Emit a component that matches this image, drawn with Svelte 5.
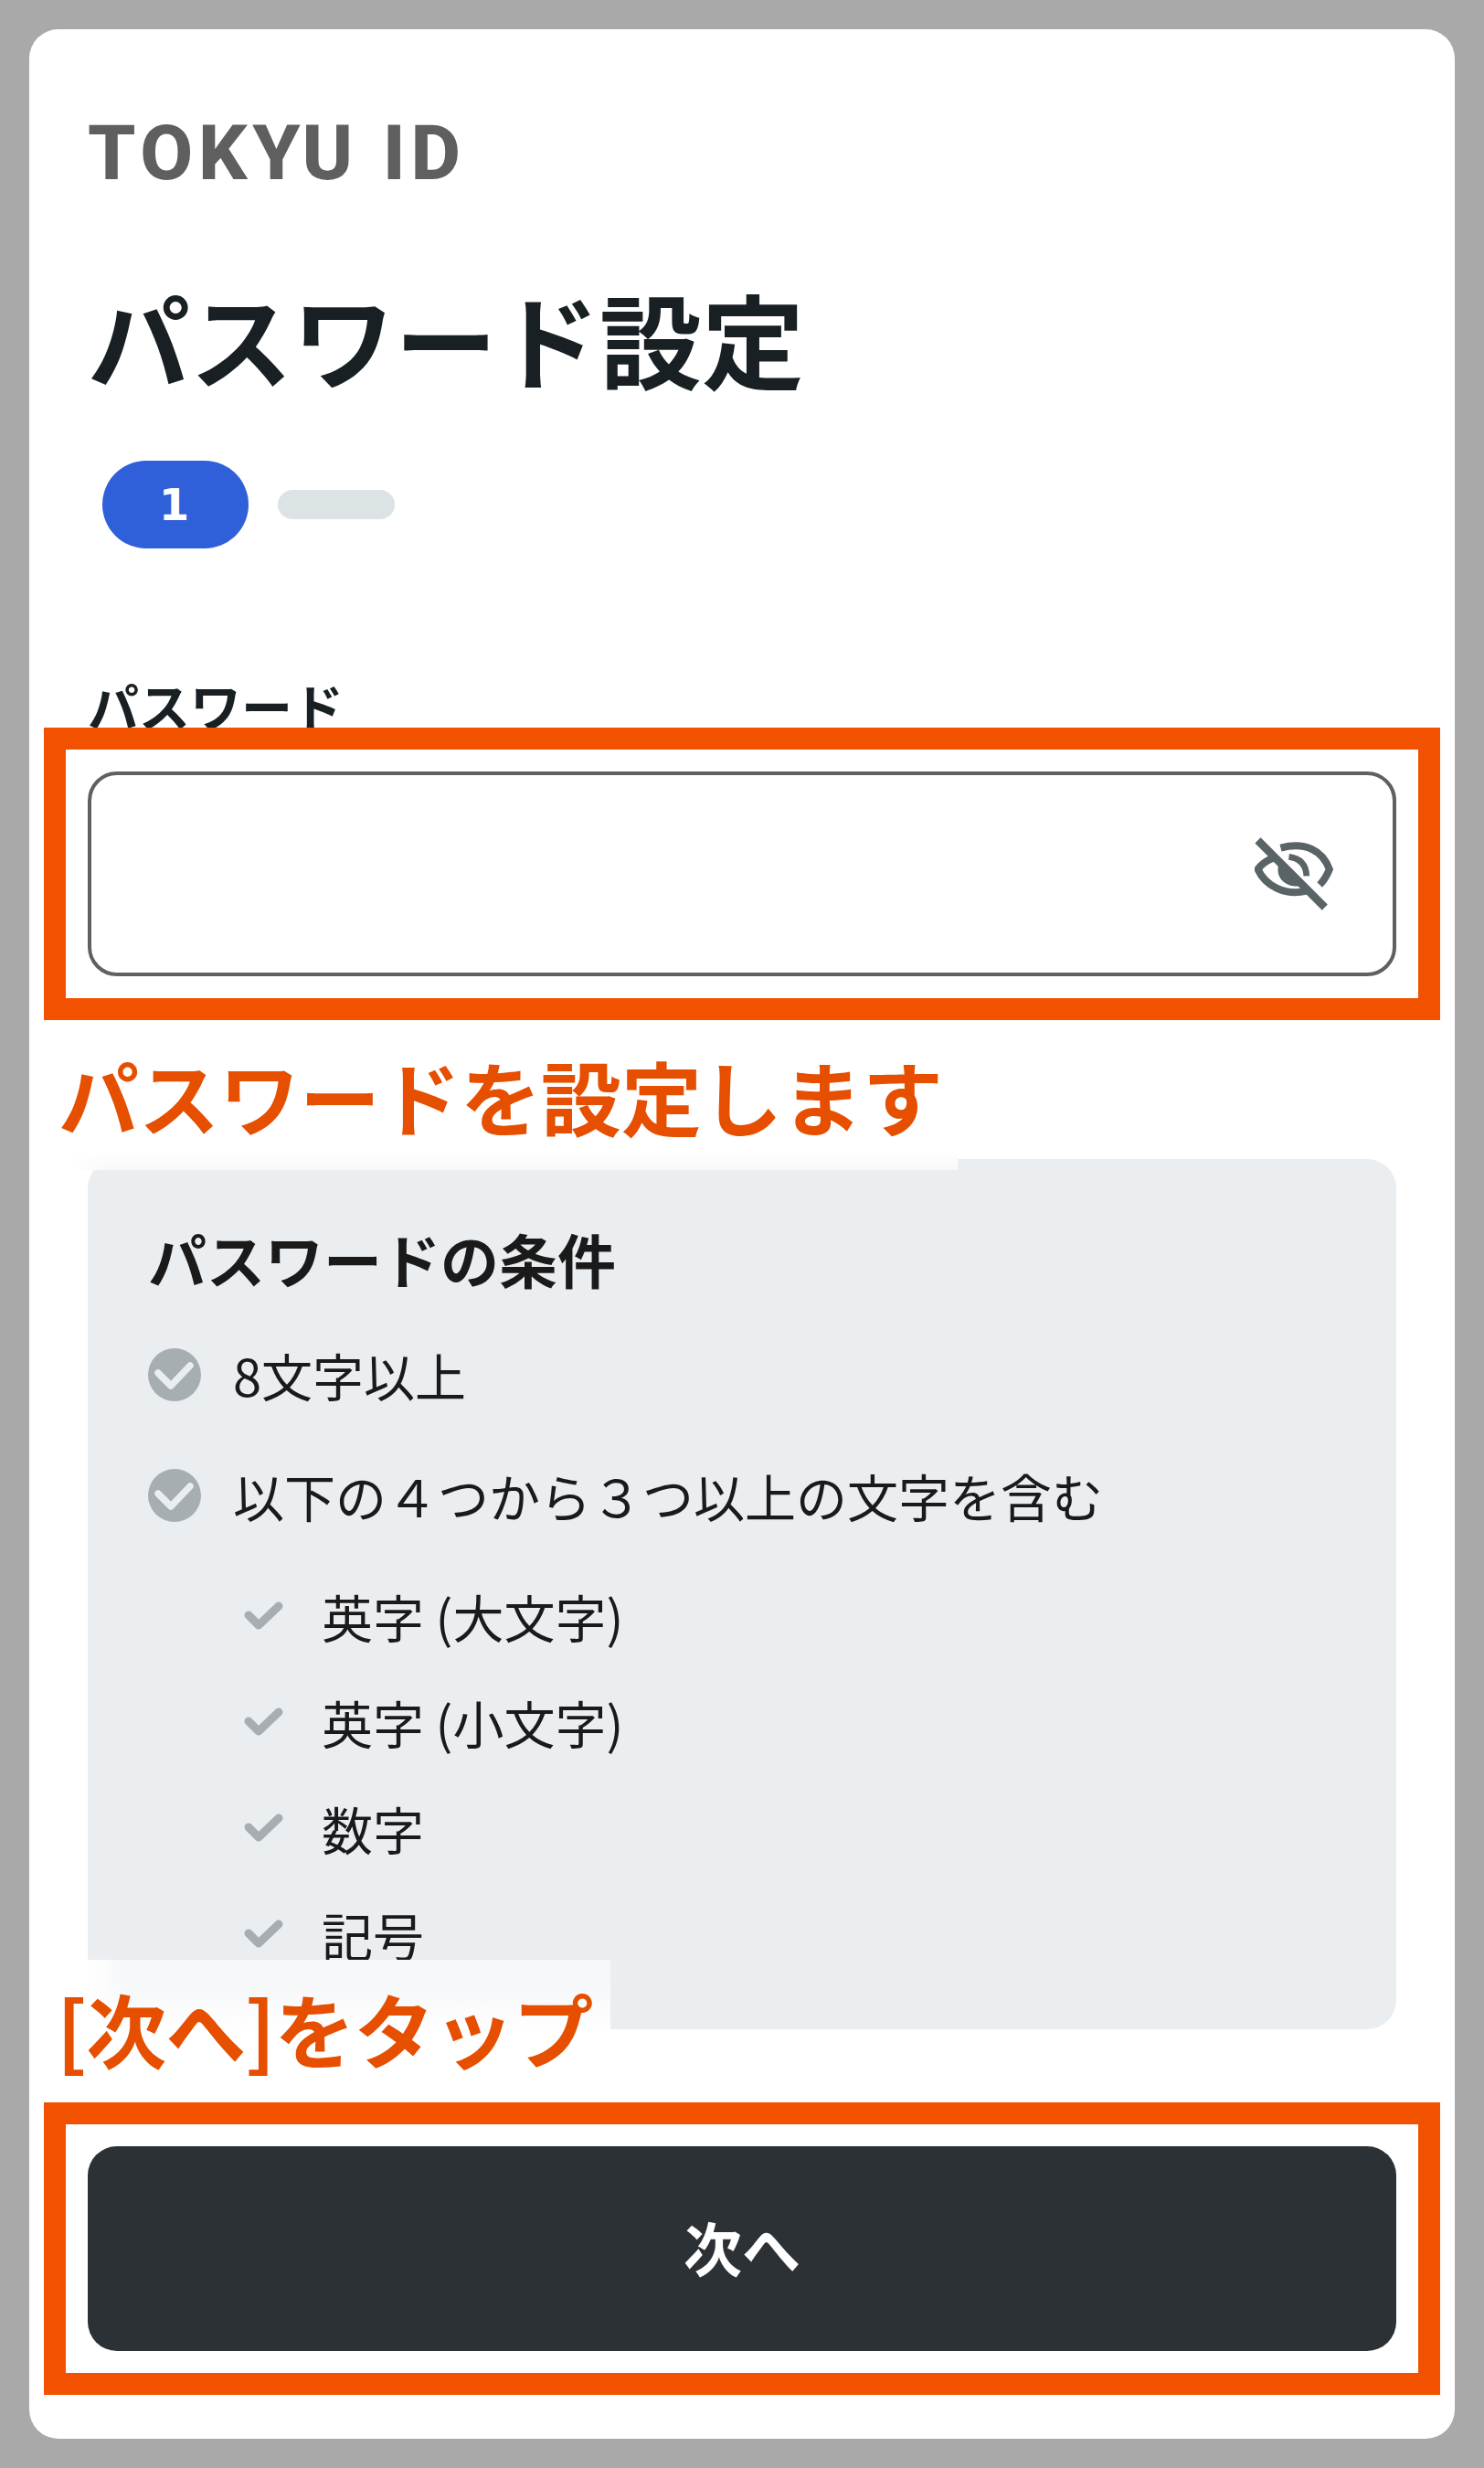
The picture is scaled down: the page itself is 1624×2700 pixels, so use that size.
<script lang="ts">
	const mainRules = ['8文字以上', '以下の４つから３つ以上の文字を含む'];
	const subRules = ['英字 (大文字)', '英字 (小文字)', '数字', '記号'];
</script>

<div class="page">
	<main class="card">
		<div class="logo">TOKYU ID</div>
		<h1>パスワード設定</h1>

		<div class="stepper">
			<span class="step current">1</span>
			<span class="step"></span>
		</div>

		<label class="label" for="password">パスワード</label>
		<div class="field">
			<input id="password" type="password" />
			<svg class="eye" viewBox="100 78 260 240" aria-hidden="true">
				<path class="eye-line" d="M185 113C265 92 322 120 345 183C337 203 327 220 313 234" />
				<path class="eye-line" d="M160 146C137 155 121 167 110 183C135 238 200 272 270 254" />
				<path class="eye-fill" d="M178 165L250 237C220 245 176 225 176 185C176 177 177 171 178 165Z" />
				<path class="eye-line thin" d="M212 142C245 146 268 165 270 205" />
				<path class="slash" d="M110 88L330 308" />
			</svg>
			<div class="highlight"></div>
		</div>

		<section class="rules">
			<h2>パスワードの条件</h2>
			<ul class="main-rules">
				{#each mainRules as rule}
					<li>
						<svg class="check-circle" viewBox="0 0 58 58" aria-hidden="true">
							<circle cx="29" cy="29" r="29" fill="#a6aeb1" />
							<path d="M11 27L25 41L46 19" fill="none" stroke="#eaeef1" stroke-width="7.5" stroke-linecap="round" stroke-linejoin="round" />
						</svg>
						<span>{rule}</span>
					</li>
				{/each}
			</ul>
			<ul class="sub-rules">
				{#each subRules as rule}
					<li>
						<svg class="check" viewBox="0 0 44 32" aria-hidden="true">
							<path d="M5 15L16 26L38 5" fill="none" stroke="#a6aeb1" stroke-width="9" stroke-linecap="round" stroke-linejoin="round" />
						</svg>
						<span>{rule}</span>
					</li>
				{/each}
			</ul>
		</section>

		<div class="field">
			<button type="button">次へ</button>
			<div class="highlight"></div>
		</div>

		<p class="note note-password">パスワードを設定します</p>
		<p class="note note-next">[次へ]をタップ</p>
	</main>
</div>

<style>
	:global(body) {
		margin: 0;
		background: #a9a9a9;
		font-family: 'Noto Sans CJK JP', 'Noto Sans', sans-serif;
	}

	.page {
		box-sizing: border-box;
		height: 2700px;
		padding: 32px;
	}

	.card {
		position: relative;
		box-sizing: border-box;
		height: 2636px;
		padding: 94px 64px 0;
		background: #fff;
		border-radius: 32px;
	}

	.logo {
		font-family: Roboto, sans-serif;
		font-size: 84px;
		font-weight: 800;
		line-height: 84px;
		letter-spacing: 5.8px;
		color: #5f5f5f;
	}

	h1 {
		margin: 91px 0 0;
		font-size: 112px;
		font-weight: 700;
		line-height: 136px;
		color: #182024;
	}

	.stepper {
		display: flex;
		align-items: center;
		gap: 32px;
		margin: 67px 0 0 16px;
	}

	.step {
		width: 128px;
		height: 32px;
		background: #dce3e5;
		border-radius: 16px;
	}

	.step.current {
		display: flex;
		align-items: center;
		justify-content: center;
		width: 160px;
		height: 96px;
		padding-right: 3px;
		box-sizing: border-box;
		font-family: 'DejaVu Sans', sans-serif;
		font-size: 48px;
		font-weight: 700;
		color: #fff;
		background: #2f60d9;
		border-radius: 48px;
	}

	.label {
		display: block;
		margin-top: 131px;
		font-size: 56px;
		font-weight: 700;
		line-height: 80px;
		height: 113px;
		color: #182024;
	}

	.field {
		position: relative;
	}

	input {
		display: block;
		box-sizing: border-box;
		width: 100%;
		height: 224px;
		background: #fff;
		border: 4px solid #5f6161;
		border-radius: 32px;
		outline: none;
	}

	.eye {
		position: absolute;
		top: 72px;
		right: 68px;
		width: 87px;
		height: 80px;
	}

	.eye-line {
		fill: none;
		stroke: #5a6366;
		stroke-width: 24;
	}

	.eye-line.thin {
		stroke-width: 20;
	}

	.eye-fill {
		fill: #5a6366;
	}

	.slash {
		fill: none;
		stroke: #5a6366;
		stroke-width: 26;
	}

	.highlight {
		position: absolute;
		inset: -48px;
		border: 24px solid #f25200;
		pointer-events: none;
	}

	.rules {
		box-sizing: border-box;
		height: 952px;
		margin: 200px 0 128px;
		padding: 60px 64px 0 66px;
		background: #eaeef1;
		border-radius: 32px;
	}

	h2 {
		margin: 0;
		font-size: 64px;
		font-weight: 700;
		line-height: 96px;
		color: #1a1a1a;
	}

	ul {
		margin: 0;
		padding: 0;
		list-style: none;
	}

	li {
		display: flex;
		align-items: center;
		font-size: 56px;
		line-height: 72px;
		color: #1a1a1a;
	}

	.main-rules {
		display: flex;
		flex-direction: column;
		gap: 60px;
		margin-top: 44px;
	}

	.main-rules li {
		gap: 35px;
	}

	.check-circle {
		flex: none;
		width: 58px;
		height: 58px;
	}

	.sub-rules {
		display: flex;
		flex-direction: column;
		gap: 44px;
		margin: 60px 0 0 105px;
	}

	.sub-rules li {
		gap: 41px;
	}

	.check {
		flex: none;
		width: 44px;
		height: 32px;
	}

	button {
		display: block;
		width: 100%;
		height: 224px;
		padding: 0 0 6px;
		font-family: inherit;
		font-size: 64px;
		font-weight: 700;
		color: #fff;
		background: #2c3135;
		border: none;
		border-radius: 32px;
	}

	.note {
		position: absolute;
		box-sizing: border-box;
		margin: 0;
		left: 16px;
		padding-left: 16px;
		font-size: 88px;
		font-weight: 700;
		color: #e64e00;
	}

	.note-password {
		top: 1118px;
		width: 1000px;
		height: 130px;
		line-height: 96px;
		background:
			linear-gradient(to right, #fff 30px, rgba(255, 255, 255, 0) 70px),
			linear-gradient(to bottom, #fff 108px, #f7f8f9 130px);
	}

	.note-next {
		top: 2112px;
		width: 620px;
		height: 140px;
		padding: 9px 0 0 14px;
		line-height: 130px;
		letter-spacing: -1px;
		background:
			linear-gradient(to right, #fff 48px, rgba(255, 255, 255, 0) 90px),
			linear-gradient(to bottom, #f7f8fa 30px, #fff 76px);
	}
</style>
